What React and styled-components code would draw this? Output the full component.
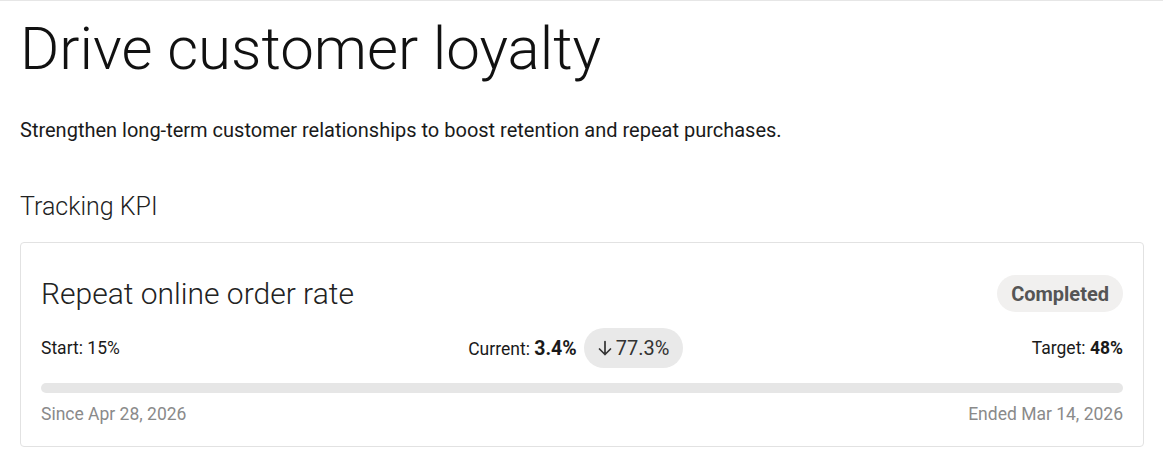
import styled, { createGlobalStyle } from 'styled-components';

const GlobalStyle = createGlobalStyle`
	body {
		margin: 0;
		background: #fff;
		font-family: Roboto, "Liberation Sans", sans-serif;
		color: #1a1a1a;
	}
`;

const Page = styled.main`
	border-top: 1px solid #e6e6e6;
	padding: 12px 19px 16px 20px;
`;

const Title = styled.h1`
	margin: 0;
	font-size: 60px;
	font-weight: 300;
	line-height: 72px;
	color: #111;
`;

const Lead = styled.p`
	margin: 33px 0 0;
	font-size: 20px;
	line-height: 24px;
	color: #1a1a1a;
`;

const SectionTitle = styled.h2`
	margin: 49px 0 0;
	font-size: 25px;
	font-weight: 300;
	line-height: 32px;
	color: #222;
`;

const Card = styled.section`
	margin-top: 19px;
	border: 1px solid #e2e2e2;
	border-radius: 4px;
	padding: 32px 20px 21px;
	display: flex;
	flex-direction: column;
`;

const CardHeader = styled.div`
	display: flex;
	align-items: center;
	justify-content: space-between;
`;

const KpiName = styled.h3`
	margin: 0;
	font-size: 30px;
	font-weight: 300;
	line-height: 36px;
	color: #222;
`;

const StatusChip = styled.span`
	background: #f1f0ef;
	color: #555;
	font-size: 20px;
	font-weight: 700;
	height: 37px;
	padding: 0 14px;
	border-radius: 19px;
	display: inline-flex;
	align-items: center;
`;

const Values = styled.div`
	margin-top: 16px;
	display: flex;
	align-items: center;
	justify-content: space-between;
	font-size: 17.5px;
	color: #1a1a1a;
`;

const Value = styled.div`
	display: flex;
	align-items: center;
	gap: 7px;
`;

const Figure = styled.b`
	font-weight: 700;
	font-size: ${({ $large }) => ($large ? '19.5px' : 'inherit')};
`;

const ChangePill = styled.span`
	background: #e9e9e9;
	color: #333;
	font-size: 20px;
	height: 40px;
	padding: 0 14px;
	border-radius: 20px;
	display: inline-flex;
	align-items: center;
	gap: 4px;
`;

const Track = styled.div`
	margin-top: 15px;
	height: 10px;
	border-radius: 5px;
	background: #e6e6e6;
`;

const Dates = styled.div`
	margin-top: 10px;
	display: flex;
	justify-content: space-between;
	font-size: 17.5px;
	line-height: 22px;
	color: #8a8a8a;
`;

const DownArrow = () => (
	<svg width="14" height="18" viewBox="0 0 14 18" fill="none" stroke="#333" strokeWidth="1.7" strokeLinecap="round" strokeLinejoin="round">
		<path d="M7 2.5v13M1.5 10L7 15.5l5.5-5.5" />
	</svg>
);

const App = () => (
	<>
		<GlobalStyle />
		<Page>
			<Title>Drive customer loyalty</Title>
			<Lead>Strengthen long-term customer relationships to boost retention and repeat purchases.</Lead>
			<SectionTitle>Tracking KPI</SectionTitle>
			<Card>
				<CardHeader>
					<KpiName>Repeat online order rate</KpiName>
					<StatusChip>Completed</StatusChip>
				</CardHeader>
				<Values>
					<Value>Start: 15%</Value>
					<Value>
						<span>
							Current: <Figure $large>3.4%</Figure>
						</span>
						<ChangePill>
							<DownArrow />
							77.3%
						</ChangePill>
					</Value>
					<Value>
						<span>
							Target: <Figure>48%</Figure>
						</span>
					</Value>
				</Values>
				<Track />
				<Dates>
					<span>Since Apr 28, 2026</span>
					<span>Ended Mar 14, 2026</span>
				</Dates>
			</Card>
		</Page>
	</>
);

export default App;
